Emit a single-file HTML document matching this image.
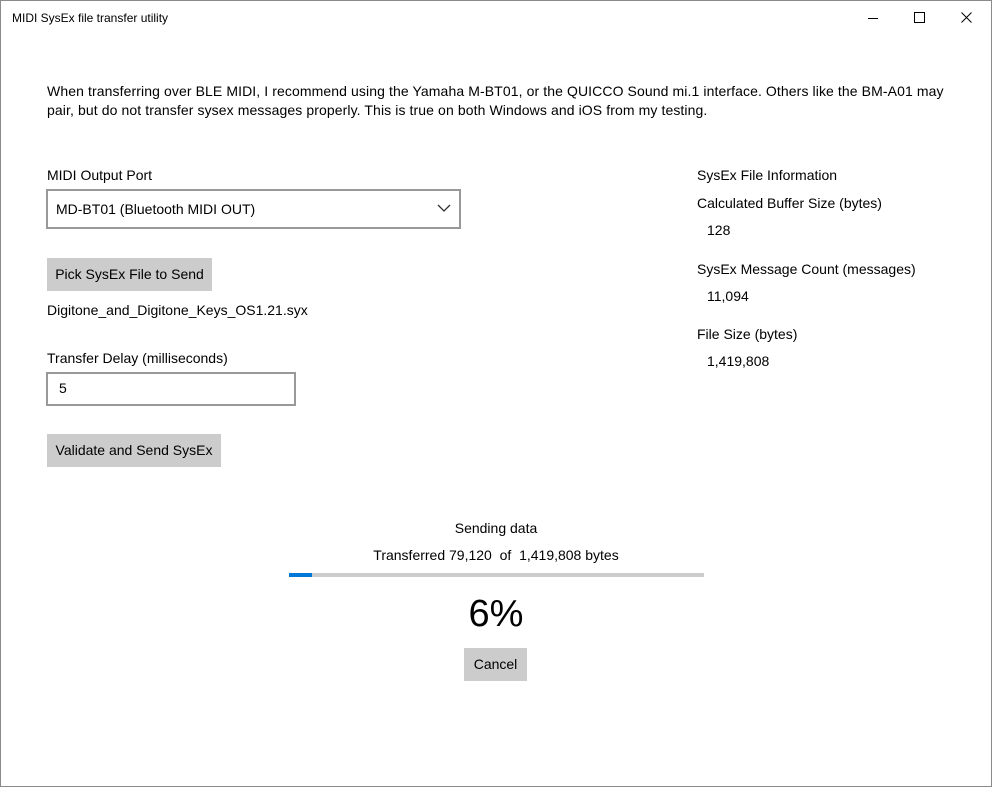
<!DOCTYPE html>
<html><head><meta charset="utf-8"><style>
body{margin:0;width:992px;height:787px;background:#fff;font-family:"Liberation Sans",sans-serif;color:#000;position:relative;overflow:hidden}
.win{position:absolute;left:0;top:0;width:990px;height:785px;border:1px solid #8a8a8a}
.a{position:absolute;white-space:nowrap;font-size:14px;line-height:19px}
.btn{position:absolute;background:#ccc;font-size:14px;text-align:center}
</style></head><body>
<div class="win"></div>
<div class="a" style="left:12px;top:9px;font-size:12px">MIDI SysEx file transfer utility</div>
<div style="position:absolute;left:868px;top:18px;width:10px;height:1px;background:#000"></div>
<div style="position:absolute;left:914px;top:12px;width:9px;height:9px;border:1px solid #000"></div>
<svg style="position:absolute;left:961px;top:12px" width="11" height="11"><path d="M0.5 0.5 L10.5 10.5 M10.5 0.5 L0.5 10.5" stroke="#000" stroke-width="1"/></svg>

<div class="a" style="left:47px;top:82px;letter-spacing:0.1px">When transferring over BLE MIDI, I recommend using the Yamaha M-BT01, or the QUICCO Sound mi.1 interface. Others like the BM-A01 may</div>
<div class="a" style="left:47px;top:101px;letter-spacing:0.1px">pair, but do not transfer sysex messages properly. This is true on both Windows and iOS from my testing.</div>

<div class="a" style="left:47px;top:166px">MIDI Output Port</div>
<div style="position:absolute;left:46px;top:189px;width:411px;height:36px;border:2px solid #999"></div>
<div class="a" style="left:56px;top:200px">MD-BT01 (Bluetooth MIDI OUT)</div>
<svg style="position:absolute;left:437px;top:204px" width="14" height="8"><path d="M1 1 L7 7 L13 1" fill="none" stroke="#333" stroke-width="1.3"/></svg>

<div class="btn" style="left:47px;top:258px;width:165px;height:33px;line-height:33px">Pick SysEx File to Send</div>
<div class="a" style="left:47px;top:301px">Digitone_and_Digitone_Keys_OS1.21.syx</div>

<div class="a" style="left:47px;top:349px">Transfer Delay (milliseconds)</div>
<div style="position:absolute;left:46px;top:372px;width:246px;height:30px;border:2px solid #999"></div>
<div class="a" style="left:59px;top:379px">5</div>

<div class="btn" style="left:47px;top:434px;width:174px;height:33px;line-height:33px">Validate and Send SysEx</div>

<div class="a" style="left:697px;top:166px">SysEx File Information</div>
<div class="a" style="left:697px;top:194px">Calculated Buffer Size (bytes)</div>
<div class="a" style="left:707px;top:221px">128</div>
<div class="a" style="left:697px;top:260px">SysEx Message Count (messages)</div>
<div class="a" style="left:707px;top:287px">11,094</div>
<div class="a" style="left:697px;top:325px">File Size (bytes)</div>
<div class="a" style="left:707px;top:352px">1,419,808</div>

<div class="a" style="left:0;width:992px;text-align:center;top:519px">Sending data</div>
<div class="a" style="left:0;width:992px;text-align:center;top:546px">Transferred 79,120 &nbsp;of &nbsp;1,419,808 bytes</div>
<div style="position:absolute;left:289px;top:573px;width:415px;height:4px;background:#ccc"></div>
<div style="position:absolute;left:289px;top:573px;width:23px;height:4px;background:#0078d7"></div>
<div class="a" style="left:0;width:992px;text-align:center;top:592px;font-size:38px;line-height:44px">6%</div>
<div class="btn" style="left:464px;top:648px;width:63px;height:33px;line-height:33px">Cancel</div>
</body></html>
